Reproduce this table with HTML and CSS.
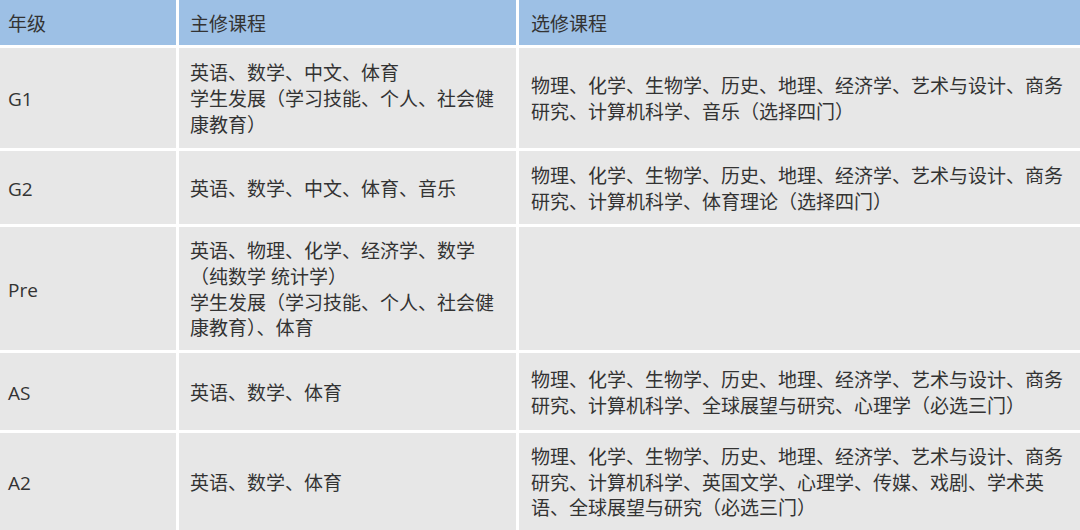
FILE: index.html
```html
<!DOCTYPE html>
<html lang="zh-CN">
<head>
<meta charset="utf-8">
<title>课程设置</title>
<link rel="stylesheet" href="styles.css">
</head>
<body>
<div class="table" role="table">
  <div class="cell head c1">年级</div>
  <div class="cell head c2">主修课程</div>
  <div class="cell head c3">选修课程</div>

  <div class="cell c1">G1</div>
  <div class="cell c2">英语、数学、中文、体育<br>学生发展（学习技能、个人、社会健康教育）</div>
  <div class="cell c3">物理、化学、生物学、历史、地理、经济学、艺术与设计、商务研究、计算机科学、音乐（选择四门）</div>

  <div class="cell c1">G2</div>
  <div class="cell c2">英语、数学、中文、体育、音乐</div>
  <div class="cell c3">物理、化学、生物学、历史、地理、经济学、艺术与设计、商务研究、计算机科学、体育理论（选择四门）</div>

  <div class="cell c1">Pre</div>
  <div class="cell c2">英语、物理、化学、经济学、数学<br>（纯数学 统计学）<br>学生发展（学习技能、个人、社会健康教育）、体育</div>
  <div class="cell c3"></div>

  <div class="cell c1">AS</div>
  <div class="cell c2">英语、数学、体育</div>
  <div class="cell c3">物理、化学、生物学、历史、地理、经济学、艺术与设计、商务研究、计算机科学、全球展望与研究、心理学（必选三门）</div>

  <div class="cell c1">A2</div>
  <div class="cell c2">英语、数学、体育</div>
  <div class="cell c3">物理、化学、生物学、历史、地理、经济学、艺术与设计、商务研究、计算机科学、英国文学、心理学、传媒、戏剧、学术英语、全球展望与研究（必选三门）</div>
</div>
</body>
</html>
```

FILE: styles.css
```css
html, body {
  margin: 0;
  padding: 0;
  background: #ffffff;
}

body {
  width: 1080px;
  height: 530px;
  overflow: hidden;
  font-family: "Open Sans", "Noto Sans CJK SC", sans-serif;
  font-size: 19px;
  line-height: 25.7px;
  color: #333333;
}

.table {
  display: grid;
  grid-template-columns: 176px 337px 561px;
  grid-template-rows: 45px 100px 73px 123px 77px 97px;
  gap: 3px;
  background: #ffffff;
}

.cell {
  background: #e7e7e7;
  display: flex;
  flex-direction: column;
  justify-content: center;
  align-items: flex-start;
  overflow: hidden;
  padding-top: 4px;
}

.cell.head {
  background: #9dc0e5;
}

.c1 {
  padding-left: 8px;
  padding-right: 8px;
}

.c2 {
  padding-left: 11px;
  padding-right: 11px;
}

.c3 {
  padding-left: 12px;
  padding-right: 13px;
}
```
